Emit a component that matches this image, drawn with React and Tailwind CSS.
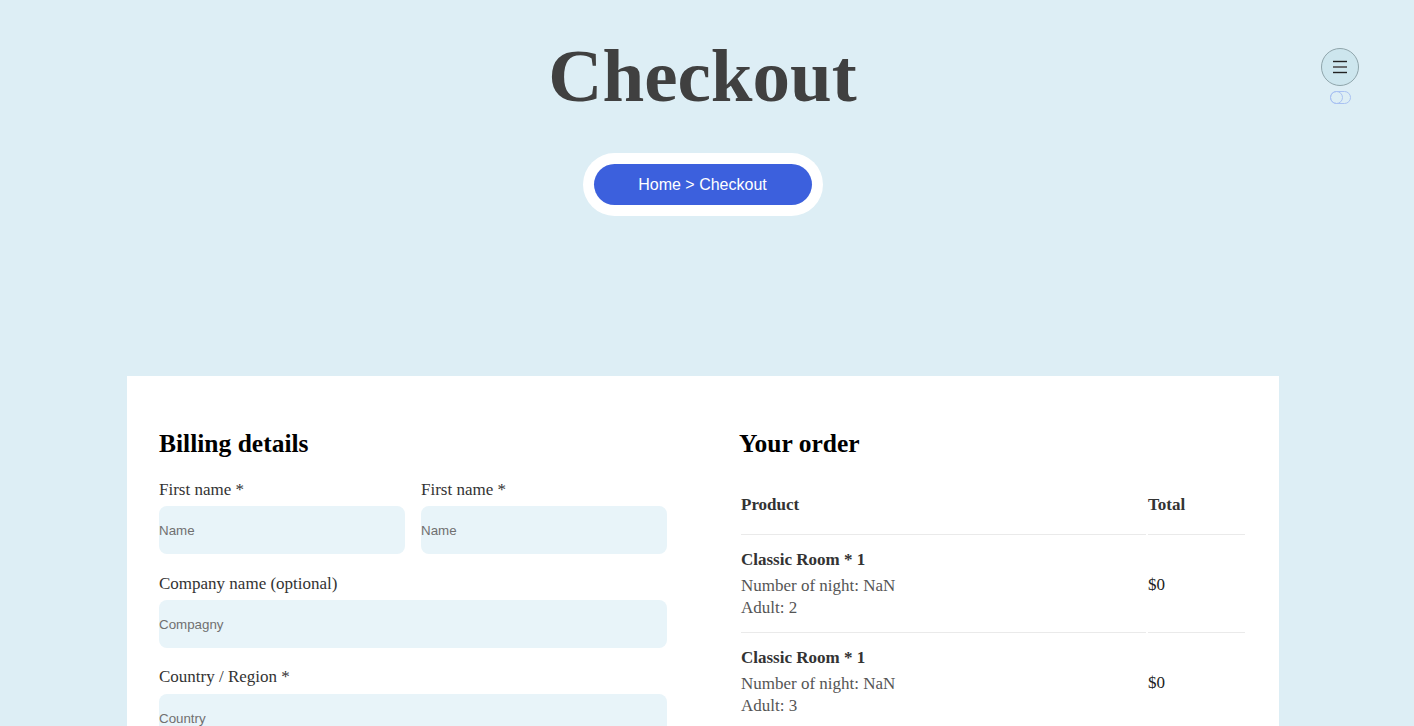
export default function App() {
  const serif = { fontFamily: '"Liberation Serif", "Times New Roman", serif' };
  const sans = { fontFamily: '"Liberation Sans", Arial, sans-serif' };
  return (
    <div className="min-h-[726px] w-full bg-[#ddeef5]" style={serif}>
      <header className="relative flex flex-col items-center pt-[38px] pr-[9px]">
        <h1 className="text-[75px] leading-none font-bold text-[#404040]">Checkout</h1>
        <div className="mt-[40px] rounded-full bg-white p-[11px]">
          <div
            className="flex h-[41px] w-[218px] items-center justify-center rounded-full bg-[#3c60dd] text-[16px] text-white"
            style={sans}
          >
            Home &gt; Checkout
          </div>
        </div>
        <div className="absolute right-[55px] top-[48px] flex flex-col items-center gap-[5px]">
          <button className="flex h-[38px] w-[38px] items-center justify-center rounded-full border border-[#8fa5ab] bg-[#cde6ee]">
            <svg width="16" height="14" viewBox="0 0 16 14">
              <line x1="1" y1="1.5" x2="15" y2="1.5" stroke="#222" strokeWidth="1.4" />
              <line x1="1" y1="7" x2="15" y2="7" stroke="#555" strokeWidth="1.7" />
              <line x1="1" y1="12.5" x2="15" y2="12.5" stroke="#222" strokeWidth="1.4" />
            </svg>
          </button>
          <div className="relative h-[13px] w-[21px] rounded-full border border-[#a9c2f2]">
            <div className="absolute left-[-1px] top-[-1px] h-[13px] w-[13px] rounded-full border border-[#a9c2f2]" />
          </div>
        </div>
      </header>

      <main className="mt-[160px] ml-[127px] w-[1152px] bg-white px-[32px] pt-[52px] pb-[40px]">
        <div className="flex gap-[72px]">
          <section className="w-[508px]">
            <h2 className="text-[25.5px] font-bold leading-[32px] text-black">Billing details</h2>
            <div className="mt-[19px] flex gap-[16px]">
              <div className="flex-1">
                <label className="block text-[17px] leading-[22px] text-[#333]">First name *</label>
                <input
                  placeholder="Name"
                  className="mt-[5px] h-[48px] w-full rounded-[8px] bg-[#e8f4f9] text-[13.33px] outline-none placeholder:text-[#707070]"
                  style={sans}
                />
              </div>
              <div className="flex-1">
                <label className="block text-[17px] leading-[22px] text-[#333]">First name *</label>
                <input
                  placeholder="Name"
                  className="mt-[5px] h-[48px] w-full rounded-[8px] bg-[#e8f4f9] text-[13.33px] outline-none placeholder:text-[#707070]"
                  style={sans}
                />
              </div>
            </div>
            <div className="mt-[19px]">
              <label className="block text-[17px] leading-[22px] text-[#333]">Company name (optional)</label>
              <input
                placeholder="Compagny"
                className="mt-[5px] h-[48px] w-full rounded-[8px] bg-[#e8f4f9] text-[13.33px] outline-none placeholder:text-[#707070]"
                style={sans}
              />
            </div>
            <div className="mt-[18px]">
              <label className="block text-[17px] leading-[22px] text-[#333]">Country / Region *</label>
              <input
                placeholder="Country"
                className="mt-[6px] h-[48px] w-full rounded-[8px] bg-[#e8f4f9] text-[13.33px] outline-none placeholder:text-[#707070]"
                style={sans}
              />
            </div>
          </section>

          <section className="flex-1">
            <h2 className="text-[25.5px] font-bold leading-[32px] text-black">Your order</h2>
            <table className="mt-[13px] w-full border-separate border-spacing-[2px] text-[17px]">
              <thead>
                <tr>
                  <th className="h-[60px] border-b border-[#eaeaea] text-left align-middle font-bold text-[#333]">Product</th>
                  <th className="w-[97px] border-b border-[#eaeaea] text-left align-middle font-bold text-[#333]">Total</th>
                </tr>
              </thead>
              <tbody>
                {[2, 3].map((a) => (
                  <tr key={a}>
                    <td className="h-[96px] border-b border-[#eaeaea] align-middle">
                      <div className="-mt-[2px] font-bold leading-[22px] text-[#333]">Classic Room * 1</div>
                      <div className="mt-[4px] leading-[22px] text-[#555]">Number of night: NaN</div>
                      <div className="leading-[22px] text-[#555]">Adult: {a}</div>
                    </td>
                    <td className="border-b border-[#eaeaea] align-middle text-[#222]">$0</td>
                  </tr>
                ))}
              </tbody>
            </table>
          </section>
        </div>
      </main>
    </div>
  );
}
